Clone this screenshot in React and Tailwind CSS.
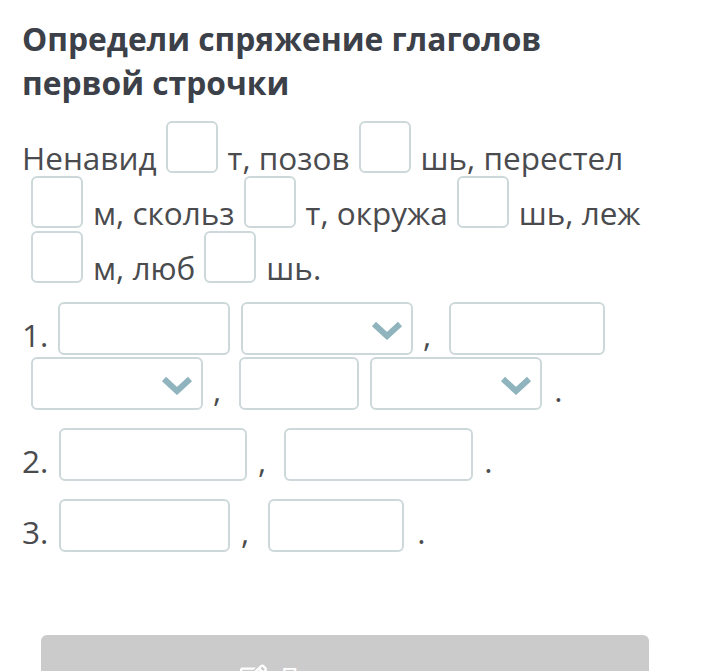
import React from "react";
import { FaRegEdit } from "react-icons/fa";

const font = { fontFamily: '"Open Sans", "Noto Sans", sans-serif' };

function Box() {
  return (
    <span className="inline-block h-[52px] w-[52px] shrink-0 rounded-[6px] border-2 border-[#cdd8da] bg-white ml-[9px] mr-[10px]" />
  );
}

function T({ children }) {
  return <span className="pt-[15px] leading-[44px] whitespace-pre">{children}</span>;
}

function Chevron() {
  return (
    <svg width="32" height="19" viewBox="0 0 32 19" className="block">
      <path d="M3 3 L16 15 L29 3" fill="none" stroke="#8fb4bd" strokeWidth="6" strokeLinecap="butt" strokeLinejoin="miter" />
    </svg>
  );
}

function Input({ w, ml }) {
  return (
    <span className={`block h-[53px] shrink-0 rounded-[6px] border-2 border-[#cdd8da] bg-white ${w} ${ml}`} />
  );
}

function Select({ ml }) {
  return (
    <span
      className={`flex h-[53px] w-[172px] shrink-0 items-center justify-end rounded-[6px] border-2 border-[#cdd8da] bg-white pr-[8px] pt-[4px] ${ml}`}
    >
      <Chevron />
    </span>
  );
}

function P({ children, ml }) {
  return <span className={`pt-[11px] leading-[44px] ${ml}`}>{children}</span>;
}

export default function App() {
  return (
    <div className="min-h-[671px] w-[705px] overflow-hidden bg-white" style={font}>
      <div className="px-[22px] pt-[17px]">
        <h1 className="text-[31.75px] font-bold leading-[44px] text-[#3c4048]">
          Определи спряжение глаголов
          <br />
          первой строчки
        </h1>

        <div className="mt-[16px] text-[31.5px] text-[#4a4b4e]">
          <div className="flex h-[55px] items-start">
            <T>Ненавид</T>
            <Box />
            <T>т, позов</T>
            <Box />
            <T>шь, перестел</T>
          </div>
          <div className="flex h-[55px] items-start">
            <Box />
            <T>м, скольз</T>
            <Box />
            <T>т, окружа</T>
            <Box />
            <T>шь, леж</T>
          </div>
          <div className="flex h-[55px] items-start">
            <Box />
            <T>м, люб</T>
            <Box />
            <T>шь.</T>
          </div>
        </div>

        <div className="mt-[16px] text-[31.5px] text-[#4a4b4e]">
          <div className="flex h-[55px] items-start">
            <span className="w-[36px] shrink-0 pt-[11px] leading-[44px]">1.</span>
            <Input w="w-[172px]" ml="" />
            <Select ml="ml-[11px]" />
            <P ml="ml-[10px]">,</P>
            <Input w="w-[156px]" ml="ml-[18px]" />
          </div>
          <div className="flex h-[54px] items-start">
            <Select ml="ml-[9px]" />
            <P ml="ml-[10px]">,</P>
            <Input w="w-[120px]" ml="ml-[18px]" />
            <Select ml="ml-[11px]" />
            <P ml="ml-[12px]">.</P>
          </div>
          <div className="mt-[17px] flex h-[54px] items-start">
            <span className="w-[37px] shrink-0 pt-[11px] leading-[44px]">2.</span>
            <Input w="w-[188px]" ml="" />
            <P ml="ml-[11px]">,</P>
            <Input w="w-[189px]" ml="ml-[18px]" />
            <P ml="ml-[11px]">.</P>
          </div>
          <div className="mt-[17px] flex h-[53px] items-start">
            <span className="w-[37px] shrink-0 pt-[11px] leading-[44px]">3.</span>
            <Input w="w-[171px]" ml="" />
            <P ml="ml-[11px]">,</P>
            <Input w="w-[136px]" ml="ml-[19px]" />
            <P ml="ml-[13px]">.</P>
          </div>
        </div>

        <div className="ml-[19px] mt-[83px] flex h-[72px] w-[608px] items-start rounded-[6px] bg-[#cbcbcb] pl-[199px] pt-[25px] text-white">
          <span className="mt-[3px] block">
            <FaRegEdit size={27} />
          </span>
          <span className="ml-[14px] text-[24px] leading-[32px]">Проверить</span>
        </div>
      </div>
    </div>
  );
}
